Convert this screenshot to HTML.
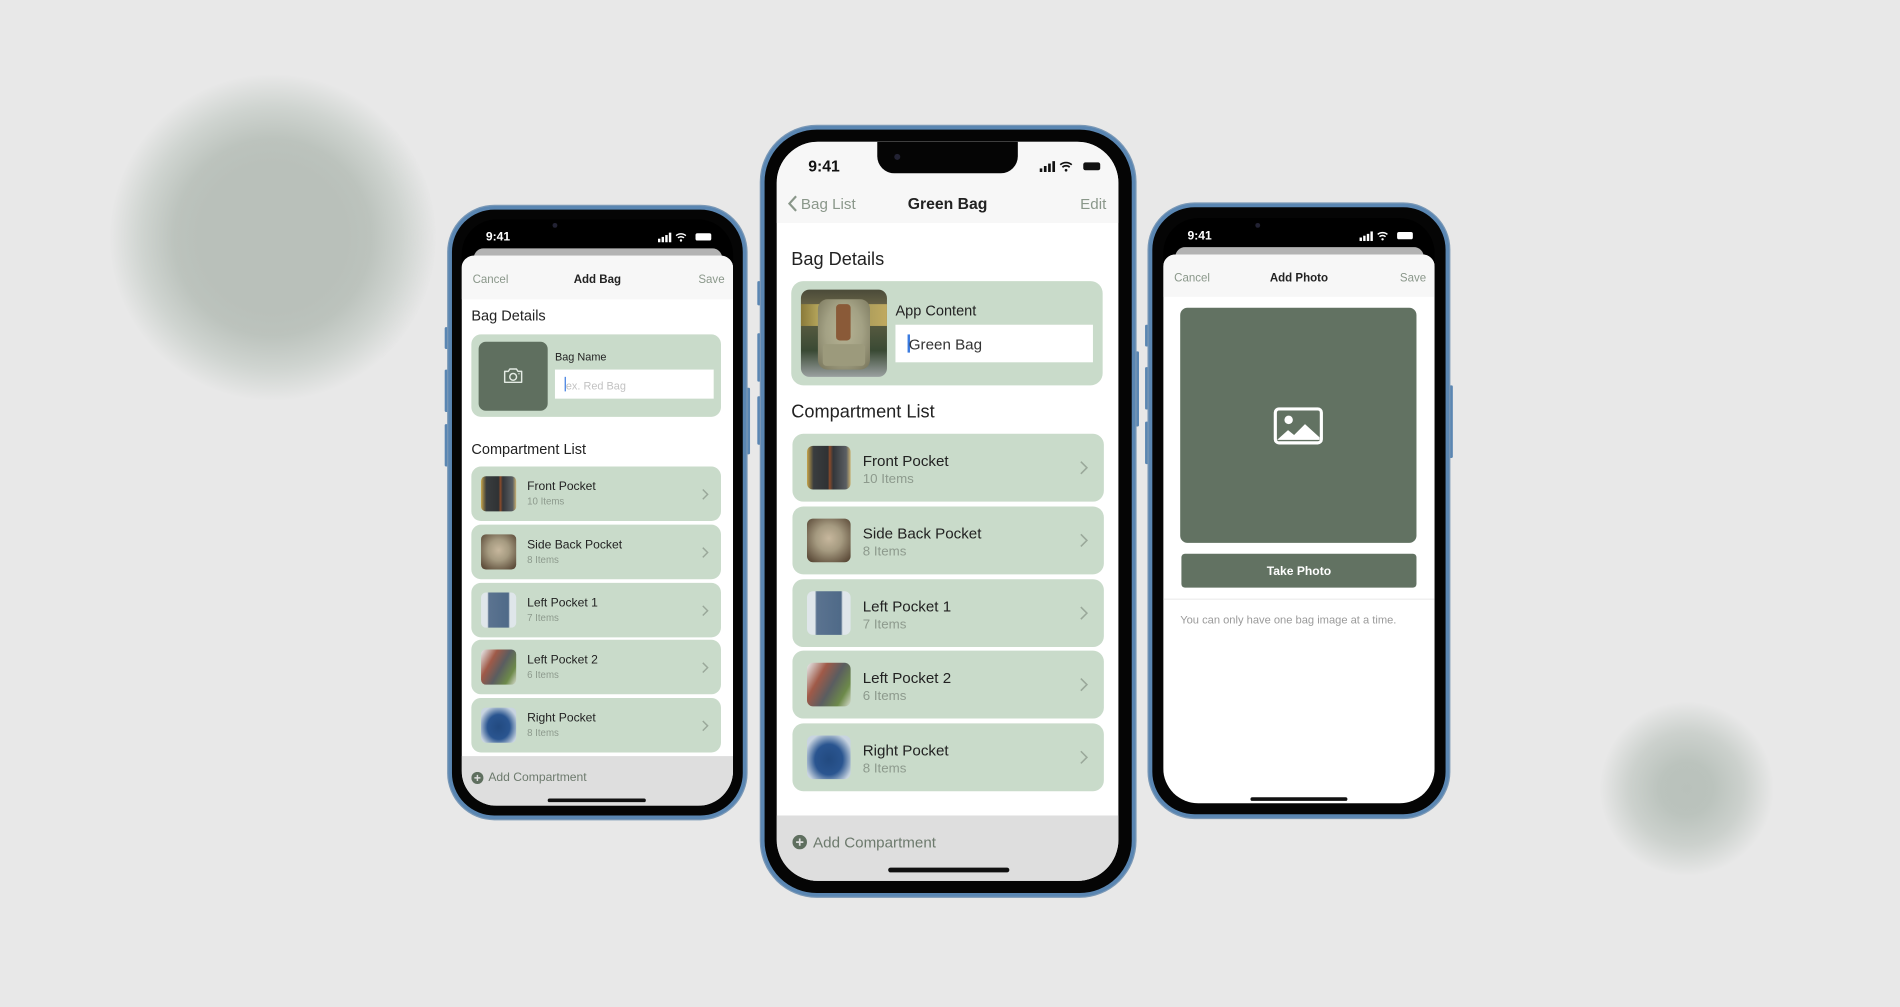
<!DOCTYPE html>
<html><head><meta charset="utf-8">
<style>
*{box-sizing:border-box;margin:0;padding:0}
html,body{width:1900px;height:1007px;overflow:hidden;background:#e8e8e8;font-family:"Liberation Sans",Arial,sans-serif}
#w{position:absolute;left:0;top:0;width:1568px;height:831px;transform:scale(1.2117);transform-origin:0 0}
.a{position:absolute}
.blob{position:absolute;border-radius:50%}
.frame{position:absolute;background:#050505;border:3px solid #5a86b2;box-shadow:0 0 0 1px #7a98b6}
.scr{position:absolute;background:#fff;overflow:hidden}
.t{position:absolute;white-space:nowrap;line-height:1;transform:translateY(1.5px)}
.notch{position:absolute;top:0;background:#050505}
.btn{position:absolute;background:#5a86b2;border-radius:1px}
.chev{position:absolute}
.sig{position:absolute}
</style></head><body><div id="w">

<div class="blob" style="left:90px;top:61px;width:270px;height:270px;background:radial-gradient(circle closest-side,#b9c0ba 0,#b9c0ba 45%,#bcc3bd 60%,#cfd4d0 80%,rgba(232,232,232,0) 100%)"></div>
<div class="blob" style="left:1320px;top:579px;width:144px;height:144px;background:radial-gradient(circle closest-side,#b9c1bb 0,#bbc3bd 30%,#ccd1cd 65%,rgba(232,232,232,0) 100%)"></div>

<!-- LEFT PHONE -->
<div class="btn" style="left:367px;top:270px;width:3px;height:18px"></div>
<div class="btn" style="left:367px;top:305px;width:3px;height:35px"></div>
<div class="btn" style="left:367px;top:350px;width:3px;height:35px"></div>
<div class="btn" style="left:616px;top:320px;width:3px;height:55px"></div>
<div class="frame" style="left:370px;top:170px;width:246px;height:506px;border-radius:38px"></div>
<div class="scr" style="left:381px;top:181px;width:224px;height:484px;border-radius:29px;background:#000">
  <div class="t" style="left:20px;top:9px;font-size:10px;font-weight:bold;color:#fff">9:41</div>
  <div class="a" style="left:75px;top:3px;width:4px;height:4px;border-radius:50%;background:#223"></div>
  <svg class="sig" style="left:162px;top:10px" width="46" height="9" viewBox="0 0 46 9"><rect x="0" y="6" width="2" height="3" fill="#fff"/><rect x="3" y="4.5" width="2" height="4.5" fill="#fff"/><rect x="6" y="3" width="2" height="6" fill="#fff"/><rect x="9" y="1" width="2" height="8" fill="#fff"/><path d="M15 3.5a6 6 0 0 1 8 0M16.5 5.3a3.8 3.8 0 0 1 5 0" stroke="#fff" stroke-width="1.2" fill="none"/><circle cx="19" cy="7.5" r="1" fill="#fff"/><rect x="31" y="1.5" width="13" height="6" rx="1.5" fill="#fff"/></svg>
  <div class="a" style="left:10px;top:24px;width:205px;height:12px;background:#b3b3b3;border-radius:8px 8px 0 0"></div>
  <div class="a" style="left:0;top:30px;width:224px;height:454px;background:#fff;border-radius:10px 10px 0 0;overflow:hidden">
    <div class="a" style="left:0;top:0;width:224px;height:36px;background:#f7f7f7"></div>
    <div class="t" style="left:9px;top:14px;font-size:9.5px;color:#8a978a">Cancel</div>
    <div class="t" style="left:0;width:224px;text-align:center;top:14px;font-size:9.5px;font-weight:bold;color:#222">Add Bag</div>
    <div class="t" style="right:7px;top:14px;font-size:9.5px;color:#8a978a">Save</div>
    <div class="t" style="left:8px;top:42px;font-size:12px;color:#222">Bag Details</div>
    <div class="a" style="left:8px;top:65px;width:206px;height:68px;background:#c9dbca;border-radius:8px">
      <div class="a" style="left:6px;top:6px;width:57px;height:57px;background:#5f6f5f;border-radius:6px">
        <svg class="a" style="left:20px;top:21px" width="17" height="14" viewBox="0 0 17 14"><path d="M1.5 3.5h3l1.3-2h5.4l1.3 2h3v9h-14z" fill="none" stroke="#e4ebe4" stroke-width="1.2" stroke-linejoin="round"/><circle cx="8.5" cy="8" r="2.8" fill="none" stroke="#e4ebe4" stroke-width="1.2"/><circle cx="13.3" cy="5.5" r=".6" fill="#e4ebe4"/></svg>
      </div>
      <div class="t" style="left:69px;top:13px;font-size:9px;color:#222">Bag Name</div>
      <div class="a" style="left:69px;top:29px;width:131px;height:24px;background:#fff"></div>
      <div class="a" style="left:77px;top:35px;width:1px;height:12px;background:#3b7be0"></div>
      <div class="t" style="left:78px;top:37px;font-size:9px;color:#c2c2c2">ex. Red Bag</div>
    </div>
    <div class="t" style="left:8px;top:152px;font-size:12px;color:#222">Compartment List</div>
    <div class="a" style="left:8px;top:174px;width:206px;height:45px;background:#c9dbca;border-radius:8px">
      <div class="a" style="left:8px;top:8px;width:29px;height:29px;border-radius:4px;background:linear-gradient(90deg,#c7a44a 0,#3a3d3f 15%,#2f3234 50%,#8a4a2a 55%,#33363a 62%,#5b5f63 90%,#c8b070 100%)"></div>
      <div class="t" style="left:46px;top:11px;font-size:10px;color:#222">Front Pocket</div>
      <div class="t" style="left:46px;top:24px;font-size:8px;color:#8d9a8d">10 Items</div>
      <svg class="chev" style="left:190px;top:18px" width="6" height="10"><path d="M1 1l4 4-4 4" fill="none" stroke="#9aa89a" stroke-width="1.2"/></svg>
    </div>
    <div class="a" style="left:8px;top:222px;width:206px;height:45px;background:#c9dbca;border-radius:8px">
      <div class="a" style="left:8px;top:8px;width:29px;height:29px;border-radius:4px;background:radial-gradient(circle at 50% 45%,#c7b79d 0,#a59a80 40%,#5b4a38 90%)"></div>
      <div class="t" style="left:46px;top:11px;font-size:10px;color:#222">Side Back Pocket</div>
      <div class="t" style="left:46px;top:24px;font-size:8px;color:#8d9a8d">8 Items</div>
      <svg class="chev" style="left:190px;top:18px" width="6" height="10"><path d="M1 1l4 4-4 4" fill="none" stroke="#9aa89a" stroke-width="1.2"/></svg>
    </div>
    <div class="a" style="left:8px;top:270px;width:206px;height:45px;background:#c9dbca;border-radius:8px">
      <div class="a" style="left:8px;top:8px;width:29px;height:29px;border-radius:4px;background:linear-gradient(90deg,#dfe6ea 0,#dfe6ea 18%,#5b7390 22%,#4f6a88 78%,#dfe6ea 82%)"></div>
      <div class="t" style="left:46px;top:11px;font-size:10px;color:#222">Left Pocket 1</div>
      <div class="t" style="left:46px;top:24px;font-size:8px;color:#8d9a8d">7 Items</div>
      <svg class="chev" style="left:190px;top:18px" width="6" height="10"><path d="M1 1l4 4-4 4" fill="none" stroke="#9aa89a" stroke-width="1.2"/></svg>
    </div>
    <div class="a" style="left:8px;top:317px;width:206px;height:45px;background:#c9dbca;border-radius:8px">
      <div class="a" style="left:8px;top:8px;width:29px;height:29px;border-radius:4px;background:linear-gradient(120deg,#e8eef0 0,#a05a48 30%,#5a5d60 55%,#6d8a4a 80%,#d8dcd0 100%)"></div>
      <div class="t" style="left:46px;top:11px;font-size:10px;color:#222">Left Pocket 2</div>
      <div class="t" style="left:46px;top:24px;font-size:8px;color:#8d9a8d">6 Items</div>
      <svg class="chev" style="left:190px;top:18px" width="6" height="10"><path d="M1 1l4 4-4 4" fill="none" stroke="#9aa89a" stroke-width="1.2"/></svg>
    </div>
    <div class="a" style="left:8px;top:365px;width:206px;height:45px;background:#c9dbca;border-radius:8px">
      <div class="a" style="left:8px;top:8px;width:29px;height:29px;border-radius:4px;background:radial-gradient(ellipse at 50% 55%,#224a80 0,#2a5590 45%,#c8d4e0 80%)"></div>
      <div class="t" style="left:46px;top:11px;font-size:10px;color:#222">Right Pocket</div>
      <div class="t" style="left:46px;top:24px;font-size:8px;color:#8d9a8d">8 Items</div>
      <svg class="chev" style="left:190px;top:18px" width="6" height="10"><path d="M1 1l4 4-4 4" fill="none" stroke="#9aa89a" stroke-width="1.2"/></svg>
    </div>
    <div class="a" style="left:0;top:413px;width:224px;height:60px;background:#dedede"></div>
    <svg class="a" style="left:8px;top:426px" width="10" height="10"><circle cx="5" cy="5" r="5" fill="#5f6f5f"/><path d="M5 2.5v5M2.5 5h5" stroke="#dedede" stroke-width="1.2"/></svg>
    <div class="t" style="left:22px;top:425px;font-size:10px;color:#6d7a6d">Add Compartment</div>
    <div class="a" style="left:71px;top:448px;width:81px;height:3px;border-radius:2px;background:#111"></div>
  </div>
</div>

<!-- CENTER PHONE -->
<div class="btn" style="left:625px;top:232px;width:3px;height:20px"></div>
<div class="btn" style="left:625px;top:275px;width:3px;height:40px"></div>
<div class="btn" style="left:625px;top:327px;width:3px;height:40px"></div>
<div class="btn" style="left:937px;top:290px;width:3px;height:62px"></div>
<div class="frame" style="left:628px;top:104px;width:309px;height:636px;border-radius:46px"></div>
<div class="scr" style="left:641px;top:117px;width:282px;height:610px;border-radius:34px">
  <div class="a" style="left:0;top:0;width:282px;height:67px;background:#f7f7f7"></div>
  <div class="notch" style="left:83px;width:116px;height:26px;border-radius:0 0 14px 14px"></div>
  <div class="a" style="left:97px;top:10px;width:5px;height:5px;border-radius:50%;background:#223"></div>
  <div class="t" style="left:26px;top:12px;font-size:13px;font-weight:bold;color:#111">9:41</div>
  <svg class="sig" style="left:217px;top:15px" width="52" height="10" viewBox="0 0 52 10"><rect x="0" y="7" width="2.2" height="3" fill="#111"/><rect x="3.5" y="5" width="2.2" height="5" fill="#111"/><rect x="7" y="3" width="2.2" height="7" fill="#111"/><rect x="10.5" y="1" width="2.2" height="9" fill="#111"/><path d="M17 4a7 7 0 0 1 9.5 0M18.8 6a4.3 4.3 0 0 1 6 0" stroke="#111" stroke-width="1.4" fill="none"/><circle cx="21.8" cy="8.5" r="1.1" fill="#111"/><rect x="36" y="2" width="14" height="6.5" rx="1.8" fill="#111"/></svg>
  <svg class="a" style="left:9px;top:44px" width="8" height="14"><path d="M7 1L1.5 7 7 13" fill="none" stroke="#8a978a" stroke-width="1.8"/></svg>
  <div class="t" style="left:20px;top:44px;font-size:12.5px;color:#8a978a">Bag List</div>
  <div class="t" style="left:0;width:282px;text-align:center;top:43px;font-size:13px;font-weight:bold;color:#222">Green Bag</div>
  <div class="t" style="right:10px;top:44px;font-size:12.5px;color:#8a978a">Edit</div>
  <div class="t" style="left:12px;top:88px;font-size:15px;color:#222">Bag Details</div>
  <div class="a" style="left:12px;top:115px;width:257px;height:86px;background:#c9dbca;border-radius:10px">
    <div class="a" style="left:8px;top:7px;width:71px;height:72px;border-radius:7px;overflow:hidden;background:linear-gradient(180deg,#4a4a38 0,#6a6548 20%,#3a4a34 70%,#9aa0a0 100%)">
      <div class="a" style="left:0;top:12px;width:71px;height:18px;background:linear-gradient(90deg,#8a7a3a,#c9b96a 30%,#a89a5a 70%,#c0aa60)"></div>
      <div class="a" style="left:14px;top:8px;width:43px;height:58px;border-radius:8px;background:radial-gradient(ellipse at 50% 45%,#b6b394 0,#a3a184 50%,#77745a 100%)"></div>
      <div class="a" style="left:29px;top:12px;width:12px;height:30px;background:#8a5a38;border-radius:3px"></div>
      <div class="a" style="left:18px;top:45px;width:35px;height:18px;background:#9c9a7c;border-radius:3px"></div>
    </div>
    <div class="t" style="left:86px;top:17px;font-size:12px;color:#222">App Content</div>
    <div class="a" style="left:86px;top:36px;width:163px;height:31px;background:#fff"></div>
    <div class="a" style="left:96px;top:44px;width:1.5px;height:15px;background:#3b7be0"></div>
    <div class="t" style="left:97px;top:45px;font-size:12.5px;color:#333">Green Bag</div>
  </div>
  <div class="t" style="left:12px;top:214px;font-size:15px;color:#222">Compartment List</div>

  <div class="a" style="left:13px;top:241px;width:257px;height:56px;background:#c9dbca;border-radius:9px">
    <div class="a" style="left:12px;top:10px;width:36px;height:36px;border-radius:5px;background:linear-gradient(90deg,#c7a44a 0,#3a3d3f 15%,#2f3234 48%,#8a4a2a 52%,#33363a 60%,#5b5f63 90%,#c8b070 100%)"></div>
    <div class="t" style="left:58px;top:15px;font-size:12.5px;color:#222">Front Pocket</div>
    <div class="t" style="left:58px;top:31px;font-size:11px;color:#8d9a8d">10 Items</div>
    <svg class="chev" style="left:237px;top:22px" width="7" height="12"><path d="M1 1l5 5-5 5" fill="none" stroke="#9aa89a" stroke-width="1.3"/></svg>
  </div>
  <div class="a" style="left:13px;top:301px;width:257px;height:56px;background:#c9dbca;border-radius:9px">
    <div class="a" style="left:12px;top:10px;width:36px;height:36px;border-radius:5px;background:radial-gradient(circle at 50% 45%,#c7b79d 0,#a59a80 40%,#5b4a38 90%)"></div>
    <div class="t" style="left:58px;top:15px;font-size:12.5px;color:#222">Side Back Pocket</div>
    <div class="t" style="left:58px;top:31px;font-size:11px;color:#8d9a8d">8 Items</div>
    <svg class="chev" style="left:237px;top:22px" width="7" height="12"><path d="M1 1l5 5-5 5" fill="none" stroke="#9aa89a" stroke-width="1.3"/></svg>
  </div>
  <div class="a" style="left:13px;top:361px;width:257px;height:56px;background:#c9dbca;border-radius:9px">
    <div class="a" style="left:12px;top:10px;width:36px;height:36px;border-radius:5px;background:linear-gradient(90deg,#dfe6ea 0,#dfe6ea 18%,#5b7390 22%,#4f6a88 78%,#dfe6ea 82%)"></div>
    <div class="t" style="left:58px;top:15px;font-size:12.5px;color:#222">Left Pocket 1</div>
    <div class="t" style="left:58px;top:31px;font-size:11px;color:#8d9a8d">7 Items</div>
    <svg class="chev" style="left:237px;top:22px" width="7" height="12"><path d="M1 1l5 5-5 5" fill="none" stroke="#9aa89a" stroke-width="1.3"/></svg>
  </div>
  <div class="a" style="left:13px;top:420px;width:257px;height:56px;background:#c9dbca;border-radius:9px">
    <div class="a" style="left:12px;top:10px;width:36px;height:36px;border-radius:5px;background:linear-gradient(120deg,#e8eef0 0,#a05a48 30%,#5a5d60 55%,#6d8a4a 80%,#d8dcd0 100%)"></div>
    <div class="t" style="left:58px;top:15px;font-size:12.5px;color:#222">Left Pocket 2</div>
    <div class="t" style="left:58px;top:31px;font-size:11px;color:#8d9a8d">6 Items</div>
    <svg class="chev" style="left:237px;top:22px" width="7" height="12"><path d="M1 1l5 5-5 5" fill="none" stroke="#9aa89a" stroke-width="1.3"/></svg>
  </div>
  <div class="a" style="left:13px;top:480px;width:257px;height:56px;background:#c9dbca;border-radius:9px">
    <div class="a" style="left:12px;top:10px;width:36px;height:36px;border-radius:5px;background:radial-gradient(ellipse at 50% 55%,#224a80 0,#2a5590 45%,#c8d4e0 80%)"></div>
    <div class="t" style="left:58px;top:15px;font-size:12.5px;color:#222">Right Pocket</div>
    <div class="t" style="left:58px;top:31px;font-size:11px;color:#8d9a8d">8 Items</div>
    <svg class="chev" style="left:237px;top:22px" width="7" height="12"><path d="M1 1l5 5-5 5" fill="none" stroke="#9aa89a" stroke-width="1.3"/></svg>
  </div>
  <div class="a" style="left:0;top:556px;width:282px;height:54px;background:#dedede"></div>
  <svg class="a" style="left:13px;top:572px" width="12" height="12"><circle cx="6" cy="6" r="6" fill="#5f6f5f"/><path d="M6 3v6M3 6h6" stroke="#dedede" stroke-width="1.4"/></svg>
  <div class="t" style="left:30px;top:571px;font-size:12.5px;color:#6d7a6d">Add Compartment</div>
  <div class="a" style="left:92px;top:599px;width:100px;height:3.5px;border-radius:2px;background:#111"></div>
</div>

<!-- RIGHT PHONE -->
<div class="btn" style="left:945px;top:268px;width:3px;height:18px"></div>
<div class="btn" style="left:945px;top:303px;width:3px;height:35px"></div>
<div class="btn" style="left:945px;top:348px;width:3px;height:35px"></div>
<div class="btn" style="left:1196px;top:318px;width:3px;height:60px"></div>
<div class="frame" style="left:948px;top:168px;width:248px;height:507px;border-radius:38px"></div>
<div class="scr" style="left:960px;top:180px;width:224px;height:483px;border-radius:29px;background:#000">
  <div class="t" style="left:20px;top:9px;font-size:10px;font-weight:bold;color:#fff">9:41</div>
  <div class="a" style="left:76px;top:4px;width:4px;height:4px;border-radius:50%;background:#223"></div>
  <svg class="sig" style="left:162px;top:10px" width="46" height="9" viewBox="0 0 46 9"><rect x="0" y="6" width="2" height="3" fill="#fff"/><rect x="3" y="4.5" width="2" height="4.5" fill="#fff"/><rect x="6" y="3" width="2" height="6" fill="#fff"/><rect x="9" y="1" width="2" height="8" fill="#fff"/><path d="M15 3.5a6 6 0 0 1 8 0M16.5 5.3a3.8 3.8 0 0 1 5 0" stroke="#fff" stroke-width="1.2" fill="none"/><circle cx="19" cy="7.5" r="1" fill="#fff"/><rect x="31" y="1.5" width="13" height="6" rx="1.5" fill="#fff"/></svg>
  <div class="a" style="left:10px;top:24px;width:205px;height:12px;background:#b3b3b3;border-radius:8px 8px 0 0"></div>
  <div class="a" style="left:0;top:30px;width:224px;height:453px;background:#fff;border-radius:10px 10px 0 0;overflow:hidden">
    <div class="a" style="left:0;top:0;width:224px;height:35px;background:#f7f7f7"></div>
    <div class="t" style="left:9px;top:14px;font-size:9.5px;color:#8a978a">Cancel</div>
    <div class="t" style="left:0;width:224px;text-align:center;top:14px;font-size:9.5px;font-weight:bold;color:#222">Add Photo</div>
    <div class="t" style="right:7px;top:14px;font-size:9.5px;color:#8a978a">Save</div>
    <div class="a" style="left:14px;top:44px;width:195px;height:194px;background:#627262;border-radius:6px">
      <svg class="a" style="left:77px;top:82px" width="41" height="31" viewBox="0 0 41 31"><rect x="1.5" y="1.5" width="38" height="28" rx="3" fill="none" stroke="#fff" stroke-width="2.6"/><circle cx="12.5" cy="10.5" r="3.5" fill="#fff"/><path d="M3 27l9-8 5 4 9-9 12 11v2H3z" fill="#fff"/></svg>
    </div>
    <div class="a" style="left:15px;top:247px;width:194px;height:28px;background:#627262;border-radius:3px"></div>
    <div class="t" style="left:15px;width:194px;text-align:center;top:256px;font-size:10px;font-weight:bold;color:#fff">Take Photo</div>
    <div class="a" style="left:0;top:284px;width:224px;height:1px;background:#ececec"></div>
    <div class="t" style="left:14px;top:296px;font-size:9.2px;color:#9a9a9a">You can only have one bag image at a time.</div>
    <div class="a" style="left:72px;top:448px;width:80px;height:3px;border-radius:2px;background:#111"></div>
  </div>
</div>

</div></body></html>
